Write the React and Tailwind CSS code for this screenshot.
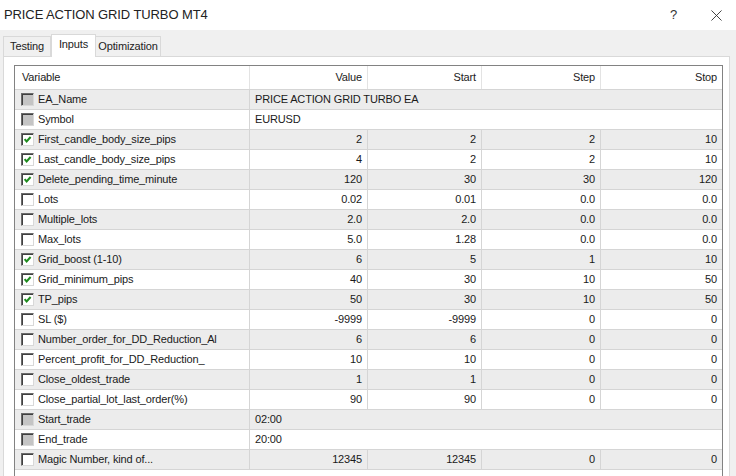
const rows = [
  { name: 'EA_Name', type: 'dis', text: 'PRICE ACTION GRID TURBO EA' },
  { name: 'Symbol', type: 'dis', text: 'EURUSD' },
  { name: 'First_candle_body_size_pips', type: 'on', v: ['2', '2', '2', '10'] },
  { name: 'Last_candle_body_size_pips', type: 'on', v: ['4', '2', '2', '10'] },
  { name: 'Delete_pending_time_minute', type: 'on', v: ['120', '30', '30', '120'] },
  { name: 'Lots', type: 'off', v: ['0.02', '0.01', '0.0', '0.0'] },
  { name: 'Multiple_lots', type: 'off', v: ['2.0', '2.0', '0.0', '0.0'] },
  { name: 'Max_lots', type: 'off', v: ['5.0', '1.28', '0.0', '0.0'] },
  { name: 'Grid_boost (1-10)', type: 'on', v: ['6', '5', '1', '10'] },
  { name: 'Grid_minimum_pips', type: 'on', v: ['40', '30', '10', '50'] },
  { name: 'TP_pips', type: 'on', v: ['50', '30', '10', '50'] },
  { name: 'SL ($)', type: 'off', v: ['-9999', '-9999', '0', '0'] },
  { name: 'Number_order_for_DD_Reduction_Al', type: 'off', v: ['6', '6', '0', '0'] },
  { name: 'Percent_profit_for_DD_Reduction_', type: 'off', v: ['10', '10', '0', '0'] },
  { name: 'Close_oldest_trade', type: 'off', v: ['1', '1', '0', '0'] },
  { name: 'Close_partial_lot_last_order(%)', type: 'off', v: ['90', '90', '0', '0'] },
  { name: 'Start_trade', type: 'dis', text: '02:00' },
  { name: 'End_trade', type: 'dis', text: '20:00' },
  { name: 'Magic Number, kind of...', type: 'off', v: ['12345', '12345', '0', '0'] },
];

const widths = ['w-[118px]', 'w-[114px]', 'w-[119px]', 'w-[121px]'];

function Box({ type }) {
  return (
    <div
      className={
        'relative h-[13px] w-[13px] shrink-0 border border-t-[#6b6b6b] border-l-[#6b6b6b] border-r-[#d8d8d8] border-b-[#d8d8d8] shadow-[inset_1px_1px_0_#404040] ' +
        (type === 'dis' ? 'bg-[#c4c4c4]' : 'bg-white')
      }
    >
      {type === 'on' && (
        <svg viewBox="0 0 13 13" className="absolute left-[-1px] top-[-1px] h-[13px] w-[13px]">
          <path d="M3.6 6.2 L5.6 8.4 L9.6 4" fill="none" stroke="#1e8c1e" strokeWidth="2" />
        </svg>
      )}
    </div>
  );
}

export default function App() {
  return (
    <div className="h-[476px] w-[736px] overflow-hidden bg-[#f0f0f0] font-['Liberation_Sans',Arial,sans-serif] text-[11px] tracking-[-0.15px] text-[#1a1a1a]">
      <div className="flex h-[30px] items-center justify-between bg-white pl-[4px] pr-[14px]">
        <span className="text-[13px] tracking-[-0.1px] text-[#222]">PRICE ACTION GRID TURBO MT4</span>
        <div className="flex items-center gap-[34px]">
          <span className="text-[13px] text-[#333]">?</span>
          <svg viewBox="0 0 12 12" className="h-[11px] w-[11px]">
            <path d="M0.5 0.5 L11.5 11.5 M11.5 0.5 L0.5 11.5" stroke="#333" strokeWidth="1" />
          </svg>
        </div>
      </div>

      <div className="flex h-[26px] items-end pl-[3px] pt-[4px]">
        <div className="flex h-[20px] w-[48px] items-center justify-center border border-b-0 border-[#d9d9d9] bg-[#f0f0f0] text-[#222]">Testing</div>
        <div className="relative z-10 -mb-px flex h-[23px] w-[45px] items-center justify-center border border-b-0 border-[#d9d9d9] bg-white pb-[3px] text-[#222]">Inputs</div>
        <div className="flex h-[20px] w-[65px] items-center justify-center border border-b-0 border-l-0 border-[#d9d9d9] bg-[#f0f0f0] text-[#222]">Optimization</div>
      </div>

      <div className="ml-[3px] mr-[6px] h-[430px] border border-[#d9d9d9] bg-white pl-[10px] pt-[8px]">
        <div className="h-[430px] w-[709px] border border-b-0 border-[#828282] bg-white">
          <div className="flex h-[24px] items-center border-b border-[#d5d5d5] text-[#222]">
            <div className="flex h-full w-[235px] items-center border-r border-[#e3e3e3] pl-[7px]">Variable</div>
            {['Value', 'Start', 'Step', 'Stop'].map((h, i) => (
              <div
                key={h}
                className={'flex h-full items-center justify-end pr-[5px] ' + widths[i] + (i < 3 ? ' border-r border-[#e3e3e3]' : '')}
              >
                {h}
              </div>
            ))}
          </div>
          {rows.map((r, idx) => (
            <div
              key={r.name}
              className={'flex h-[20px] border-b border-[#d5d5d5] ' + (idx % 2 === 0 ? 'bg-[#ececec]' : 'bg-white')}
            >
              <div className="flex w-[235px] items-center gap-[4px] border-r border-[#d5d5d5] pl-[6px]">
                <Box type={r.type} />
                <span className="whitespace-nowrap">{r.name}</span>
              </div>
              {r.type === 'dis' ? (
                <div className="flex flex-1 items-center pl-[5px]">{r.text}</div>
              ) : (
                r.v.map((val, i) => (
                  <div
                    key={i}
                    className={'flex items-center justify-end pr-[5px] ' + widths[i] + (i < 3 ? ' border-r border-[#d5d5d5]' : '')}
                  >
                    {val}
                  </div>
                ))
              )}
            </div>
          ))}
        </div>
      </div>
    </div>
  );
}
